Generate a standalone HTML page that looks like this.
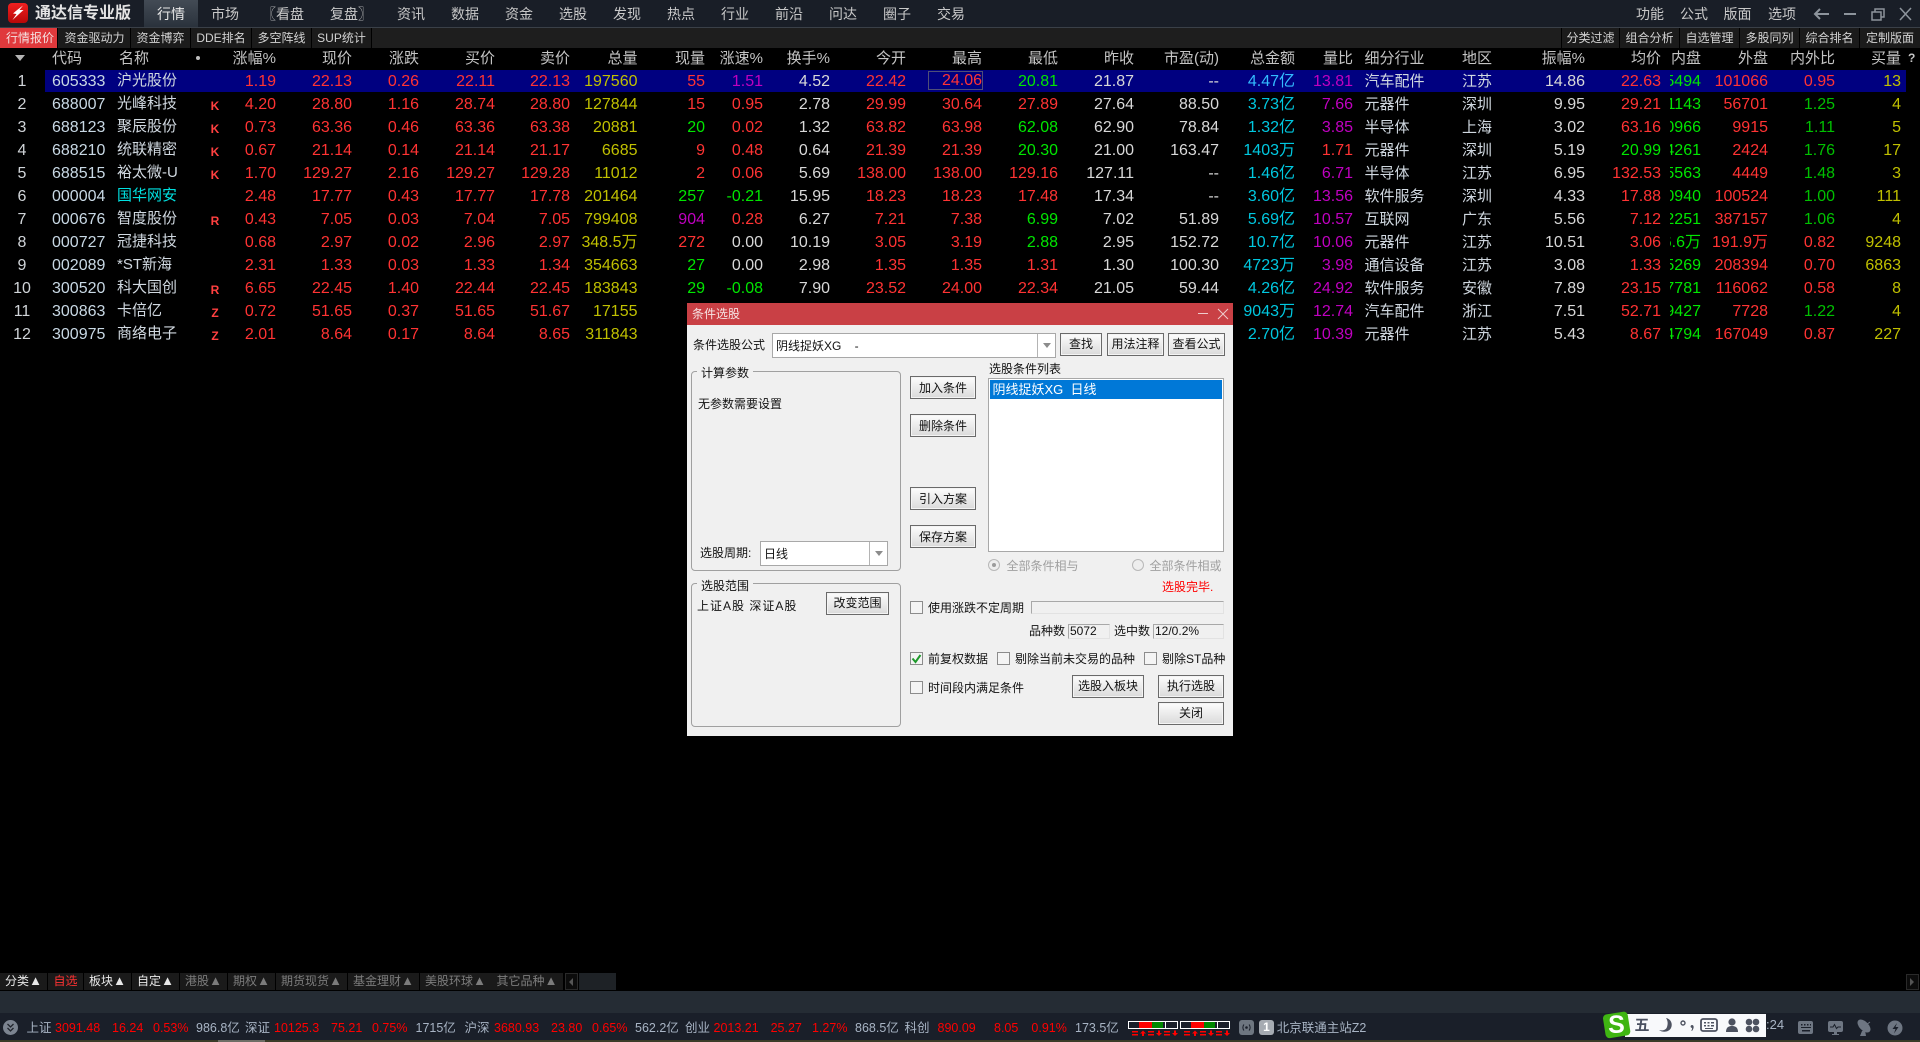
<!DOCTYPE html>
<html lang="zh"><head><meta charset="utf-8"><title>通达信专业版</title>
<style>
html,body{margin:0;padding:0;background:#000;width:1920px;height:1042px;overflow:hidden}
body{position:relative;font-family:"Liberation Sans","Noto Sans CJK SC",sans-serif;color:#d8d8d8}
div,span{box-sizing:border-box}
.a{position:absolute}
.t{position:absolute;white-space:nowrap;line-height:16px;height:16px}
.m{position:absolute;top:5px;width:60px;text-align:center;font-size:14px;line-height:18px;color:#c8c8c8;white-space:nowrap}
.tb{position:absolute;top:28px;height:20px;background:#1b1b1b;border-right:1px solid #000;text-align:center;font-size:12px;line-height:20px;color:#d2d2d2;white-space:nowrap}
.h{position:absolute;top:48px;height:22px;line-height:21px;font-size:15px;color:#c4c4c4;white-space:nowrap}
.hr{width:100px;text-align:right}
.r{position:absolute;left:0;width:1920px;height:23px;line-height:23px;font-size:16px;white-space:nowrap}
.r span{position:absolute;top:0}
.x{width:100px;text-align:right}
.i{left:0;width:44px;text-align:center;color:#d0d4d8}
.cd{left:52px;color:#c8d8e4}
.nm{left:117px;font-size:15px;color:#d0d8e0;top:-1px!important}
.fl{left:205px;width:20px;text-align:center;font-size:12px;font-weight:bold;color:#ff4040;top:2px!important}
.c1{left:176px;color:#f33}.c2{left:252px;color:#f33}.c3{left:319px;color:#f33}.c4{left:395px;color:#f33}.c5{left:470px;color:#f33}
.c6{left:537.5px;color:#c0c000}.c7{left:605px;color:#f33}.c8{left:663px;color:#f33}.c9{left:730px;color:#d8d8d8}
.c10{left:806px;color:#f33}.c11{left:882px;color:#f33}.c12{left:958px;color:#f33}.c13{left:1034px;color:#d8d8d8}.c14{left:1119px;color:#d8d8d8}
.c15{left:1195px;color:#00c8e0}.c16{left:1253px;color:#c000c0}
.ind{left:1364.5px;font-size:15px;color:#d0d8e0}.reg{left:1462px;font-size:15px;color:#d0d8e0}
.c19{left:1485px;color:#d8d8d8}.c20{left:1561px;color:#f33}
.nb{left:1670px;width:31px;height:23px;overflow:hidden;color:#00e600}
.nb b{position:absolute;right:0;top:0;font-weight:normal}
.c22{left:1668px;color:#f33}.c23{left:1735px;color:#f33}.c24{left:1801px;color:#c0c000}
.G{color:#00e600!important}.D{color:#00c000!important}.P{color:#c000c0!important}.W{color:#d8d8d8!important}.R{color:#f33!important}
.btn{position:absolute;background:linear-gradient(#fdfdfd,#dadada);border:1px solid #6a6a6a;box-shadow:inset 0 0 0 1px #f4f4f4;font-size:12px;color:#111;text-align:center;line-height:21px;white-space:nowrap}
.d{font-size:12px;color:#111}
.cb{position:absolute;width:13px;height:13px;background:#f4f4f4;border:1px solid #8c8c8c}
.grp{position:absolute;border:1px solid #a0a0a0;border-radius:4px}
.lbl{background:#f0f0f0;padding:0 4px}
.fld{position:absolute;background:#f0f0f0;border:1px solid #e2e2e2;border-top-color:#a8a8a8;border-left-color:#a8a8a8}
.bt{position:absolute;top:973px;height:17px;background:#1a1a1a;font-size:12px;line-height:17px;text-align:center;white-space:nowrap;color:#7c7c7c}
.bt i{font-style:normal;font-size:13px;line-height:13px}
.on{color:#e8e8e8}
.s{position:absolute;top:1020px;height:16px;line-height:16px;font-size:12.5px;white-space:nowrap;color:#a8b4c4}
.sr{color:#f00}
</style></head><body>

<!-- top menu -->
<div class="a" style="left:0;top:0;width:1920px;height:27px;background:#191e27"></div>
<div class="a" style="left:0;top:27px;width:1920px;height:1px;background:#3a4048"></div>
<div class="a" style="left:144px;top:0;width:54px;height:27px;background:linear-gradient(#434b55,#2a323c)"></div>
<div class="a" style="left:8px;top:3px;width:20px;height:20px;border-radius:4px;background:linear-gradient(#f02020,#b80808)"></div>
<svg class="a" style="left:8px;top:3px" width="20" height="20" viewBox="0 0 20 20"><path d="M15 2.5 8.500 7.500 5 10.500 8.500 11 4.500 17 10.500 11.500 15.500 7 11.500 7Z" fill="#fff"/></svg>
<div class="t" style="left:35px;top:5px;font-size:16px;font-weight:bold;line-height:18px;height:18px;color:#e4e4e4">通达信专业版</div>
<div class="m" style="left:141px;color:#e8e8e8">行情</div>
<div class="m" style="left:195px">市场</div>
<div class="m" style="left:262px;width:48px;text-align:left">〖看盘</div>
<div class="m" style="left:330px;width:42px;text-align:left">复盘〗</div>
<div class="m" style="left:381px">资讯</div><div class="m" style="left:435px">数据</div><div class="m" style="left:489px">资金</div><div class="m" style="left:543px">选股</div><div class="m" style="left:597px">发现</div><div class="m" style="left:651px">热点</div><div class="m" style="left:705px">行业</div><div class="m" style="left:759px">前沿</div><div class="m" style="left:813px">问达</div><div class="m" style="left:867px">圈子</div><div class="m" style="left:921px">交易</div>
<div class="m" style="left:1620px">功能</div><div class="m" style="left:1664px">公式</div><div class="m" style="left:1707.5px">版面</div><div class="m" style="left:1752px">选项</div>
<svg class="a" style="left:1812px;top:6px" width="104" height="16" viewBox="0 0 104 16" fill="none" stroke="#8d949c" stroke-width="1.5"><path d="M17 8H3M8 3 3 8l5 5" stroke-width="2"/><path d="M32 8h12" stroke-width="2"/><path d="M60 6h9v8h-9zM63 6V3h9v8h-3"/><path d="M88 2l11 12M99 2 88 14"/></svg>

<!-- tab bar -->
<div class="a" style="left:0;top:28px;width:1920px;height:20px;background:#1e1e1e"></div>
<div class="tb" style="left:0;width:58px;background:#e0393c;color:#f4e0e0;padding-left:3px">行情报价</div>
<div class="tb" style="left:59px;width:72px">资金驱动力</div>
<div class="tb" style="left:131px;width:60px">资金博弈</div>
<div class="tb" style="left:191px;width:61px">DDE排名</div>
<div class="tb" style="left:252px;width:60px">多空阵线</div>
<div class="tb" style="left:312px;width:60px">SUP统计</div>
<div class="tb" style="left:1561px;width:59px;border-left:1px solid #000">分类过滤</div>
<div class="tb" style="left:1620px;width:60px">组合分析</div>
<div class="tb" style="left:1680px;width:60px">自选管理</div>
<div class="tb" style="left:1740px;width:60px">多股同列</div>
<div class="tb" style="left:1800px;width:60px">综合排名</div>
<div class="tb" style="left:1860px;width:60px;border:0">定制版面</div>

<!-- header -->
<svg class="a" style="left:15px;top:55px" width="11" height="6"><path d="M0 0h10L5 6Z" fill="#b4b4b4"/></svg>
<div class="a" style="left:196px;top:56px;width:4px;height:4px;border-radius:2px;background:#c0c0c0"></div>
<div class="h" style="left:52px">代码</div><div class="h" style="left:119px">名称</div>
<div class="h hr" style="left:176px">涨幅%</div><div class="h hr" style="left:252px">现价</div><div class="h hr" style="left:319px">涨跌</div><div class="h hr" style="left:395px">买价</div><div class="h hr" style="left:470px">卖价</div><div class="h hr" style="left:537.5px">总量</div><div class="h hr" style="left:605px">现量</div><div class="h hr" style="left:663px">涨速%</div><div class="h hr" style="left:730px">换手%</div><div class="h hr" style="left:806px">今开</div><div class="h hr" style="left:882px">最高</div><div class="h hr" style="left:958px">最低</div><div class="h hr" style="left:1034px">昨收</div><div class="h hr" style="left:1119px">市盈(动)</div><div class="h hr" style="left:1195px">总金额</div><div class="h hr" style="left:1253px">量比</div>
<div class="h" style="left:1364.5px">细分行业</div><div class="h" style="left:1462px">地区</div>
<div class="h hr" style="left:1485px">振幅%</div><div class="h hr" style="left:1561px">均价</div><div class="h hr" style="left:1601px">内盘</div><div class="h hr" style="left:1668px">外盘</div><div class="h hr" style="left:1735px">内外比</div><div class="h hr" style="left:1801px">买量</div>
<div class="h" style="left:1908px;font-size:12px;font-weight:bold">?</div>

<!-- selected row bg -->
<div class="a" style="left:45px;top:70px;width:1861px;height:22px;background:#000080"></div>
<div class="a" style="left:928px;top:71px;width:55px;height:19px;border:1px solid #4e4e78"></div>

<!-- rows -->
<div class="r" style="top:70px"><span class="i">1</span><span class="cd">605333</span><span class="nm">沪光股份</span><span class="x c1">1.19</span><span class="x c2">22.13</span><span class="x c3">0.26</span><span class="x c4">22.11</span><span class="x c5">22.13</span><span class="x c6">197560</span><span class="x c7">55</span><span class="x c8 P">1.51</span><span class="x c9">4.52</span><span class="x c10">22.42</span><span class="x c11" style="top:-1px">24.06</span><span class="x c12 G">20.81</span><span class="x c13">21.87</span><span class="x c14">--</span><span class="x c15" style="color:#33bbff">4.47亿</span><span class="x c16">13.81</span><span class="ind">汽车配件</span><span class="reg">江苏</span><span class="x c19">14.86</span><span class="x c20">22.63</span><span class="nb"><b>5494</b></span><span class="x c22">101066</span><span class="x c23">0.95</span><span class="x c24">13</span></div>
<div class="r" style="top:93px"><span class="i">2</span><span class="cd">688007</span><span class="nm">光峰科技</span><span class="fl">K</span><span class="x c1">4.20</span><span class="x c2">28.80</span><span class="x c3">1.16</span><span class="x c4">28.74</span><span class="x c5">28.80</span><span class="x c6">127844</span><span class="x c7">15</span><span class="x c8">0.95</span><span class="x c9">2.78</span><span class="x c10">29.99</span><span class="x c11">30.64</span><span class="x c12">27.89</span><span class="x c13">27.64</span><span class="x c14">88.50</span><span class="x c15">3.73亿</span><span class="x c16">7.66</span><span class="ind">元器件</span><span class="reg">深圳</span><span class="x c19">9.95</span><span class="x c20">29.21</span><span class="nb"><b>1143</b></span><span class="x c22">56701</span><span class="x c23 D">1.25</span><span class="x c24">4</span></div>
<div class="r" style="top:116px"><span class="i">3</span><span class="cd">688123</span><span class="nm">聚辰股份</span><span class="fl">K</span><span class="x c1">0.73</span><span class="x c2">63.36</span><span class="x c3">0.46</span><span class="x c4">63.36</span><span class="x c5">63.38</span><span class="x c6">20881</span><span class="x c7 G">20</span><span class="x c8">0.02</span><span class="x c9">1.32</span><span class="x c10">63.82</span><span class="x c11">63.98</span><span class="x c12 G">62.08</span><span class="x c13">62.90</span><span class="x c14">78.84</span><span class="x c15">1.32亿</span><span class="x c16">3.85</span><span class="ind">半导体</span><span class="reg">上海</span><span class="x c19">3.02</span><span class="x c20">63.16</span><span class="nb"><b>0966</b></span><span class="x c22">9915</span><span class="x c23 D">1.11</span><span class="x c24">5</span></div>
<div class="r" style="top:139px"><span class="i">4</span><span class="cd">688210</span><span class="nm">统联精密</span><span class="fl">K</span><span class="x c1">0.67</span><span class="x c2">21.14</span><span class="x c3">0.14</span><span class="x c4">21.14</span><span class="x c5">21.17</span><span class="x c6">6685</span><span class="x c7">9</span><span class="x c8">0.48</span><span class="x c9">0.64</span><span class="x c10">21.39</span><span class="x c11">21.39</span><span class="x c12 G">20.30</span><span class="x c13">21.00</span><span class="x c14">163.47</span><span class="x c15">1403万</span><span class="x c16 R">1.71</span><span class="ind">元器件</span><span class="reg">深圳</span><span class="x c19">5.19</span><span class="x c20 G">20.99</span><span class="nb"><b>4261</b></span><span class="x c22">2424</span><span class="x c23 D">1.76</span><span class="x c24">17</span></div>
<div class="r" style="top:162px"><span class="i">5</span><span class="cd">688515</span><span class="nm">裕太微-U</span><span class="fl">K</span><span class="x c1">1.70</span><span class="x c2">129.27</span><span class="x c3">2.16</span><span class="x c4">129.27</span><span class="x c5">129.28</span><span class="x c6">11012</span><span class="x c7">2</span><span class="x c8">0.06</span><span class="x c9">5.69</span><span class="x c10">138.00</span><span class="x c11">138.00</span><span class="x c12">129.16</span><span class="x c13">127.11</span><span class="x c14">--</span><span class="x c15">1.46亿</span><span class="x c16">6.71</span><span class="ind">半导体</span><span class="reg">江苏</span><span class="x c19">6.95</span><span class="x c20">132.53</span><span class="nb"><b>5563</b></span><span class="x c22">4449</span><span class="x c23 D">1.48</span><span class="x c24">3</span></div>
<div class="r" style="top:185px"><span class="i">6</span><span class="cd">000004</span><span class="nm" style="color:#00e0e0">国华网安</span><span class="x c1">2.48</span><span class="x c2">17.77</span><span class="x c3">0.43</span><span class="x c4">17.77</span><span class="x c5">17.78</span><span class="x c6">201464</span><span class="x c7 G">257</span><span class="x c8 G">-0.21</span><span class="x c9">15.95</span><span class="x c10">18.23</span><span class="x c11">18.23</span><span class="x c12">17.48</span><span class="x c13">17.34</span><span class="x c14">--</span><span class="x c15">3.60亿</span><span class="x c16">13.56</span><span class="ind">软件服务</span><span class="reg">深圳</span><span class="x c19">4.33</span><span class="x c20">17.88</span><span class="nb"><b>0940</b></span><span class="x c22">100524</span><span class="x c23 D">1.00</span><span class="x c24">111</span></div>
<div class="r" style="top:208px"><span class="i">7</span><span class="cd">000676</span><span class="nm">智度股份</span><span class="fl">R</span><span class="x c1">0.43</span><span class="x c2">7.05</span><span class="x c3">0.03</span><span class="x c4">7.04</span><span class="x c5">7.05</span><span class="x c6">799408</span><span class="x c7 P">904</span><span class="x c8">0.28</span><span class="x c9">6.27</span><span class="x c10">7.21</span><span class="x c11">7.38</span><span class="x c12 G">6.99</span><span class="x c13">7.02</span><span class="x c14">51.89</span><span class="x c15">5.69亿</span><span class="x c16">10.57</span><span class="ind">互联网</span><span class="reg">广东</span><span class="x c19">5.56</span><span class="x c20">7.12</span><span class="nb"><b>2251</b></span><span class="x c22">387157</span><span class="x c23 D">1.06</span><span class="x c24">4</span></div>
<div class="r" style="top:231px"><span class="i">8</span><span class="cd">000727</span><span class="nm">冠捷科技</span><span class="x c1">0.68</span><span class="x c2">2.97</span><span class="x c3">0.02</span><span class="x c4">2.96</span><span class="x c5">2.97</span><span class="x c6">348.5万</span><span class="x c7">272</span><span class="x c8 W">0.00</span><span class="x c9">10.19</span><span class="x c10">3.05</span><span class="x c11">3.19</span><span class="x c12 G">2.88</span><span class="x c13">2.95</span><span class="x c14">152.72</span><span class="x c15">10.7亿</span><span class="x c16">10.06</span><span class="ind">元器件</span><span class="reg">江苏</span><span class="x c19">10.51</span><span class="x c20">3.06</span><span class="nb"><b>6.6万</b></span><span class="x c22">191.9万</span><span class="x c23">0.82</span><span class="x c24">9248</span></div>
<div class="r" style="top:254px"><span class="i">9</span><span class="cd">002089</span><span class="nm">*ST新海</span><span class="x c1">2.31</span><span class="x c2">1.33</span><span class="x c3">0.03</span><span class="x c4">1.33</span><span class="x c5">1.34</span><span class="x c6">354663</span><span class="x c7 G">27</span><span class="x c8 W">0.00</span><span class="x c9">2.98</span><span class="x c10">1.35</span><span class="x c11">1.35</span><span class="x c12">1.31</span><span class="x c13">1.30</span><span class="x c14">100.30</span><span class="x c15">4723万</span><span class="x c16">3.98</span><span class="ind">通信设备</span><span class="reg">江苏</span><span class="x c19">3.08</span><span class="x c20">1.33</span><span class="nb"><b>5269</b></span><span class="x c22">208394</span><span class="x c23">0.70</span><span class="x c24">6863</span></div>
<div class="r" style="top:277px"><span class="i">10</span><span class="cd">300520</span><span class="nm">科大国创</span><span class="fl">R</span><span class="x c1">6.65</span><span class="x c2">22.45</span><span class="x c3">1.40</span><span class="x c4">22.44</span><span class="x c5">22.45</span><span class="x c6">183843</span><span class="x c7 G">29</span><span class="x c8 G">-0.08</span><span class="x c9">7.90</span><span class="x c10">23.52</span><span class="x c11">24.00</span><span class="x c12">22.34</span><span class="x c13">21.05</span><span class="x c14">59.44</span><span class="x c15">4.26亿</span><span class="x c16">24.92</span><span class="ind">软件服务</span><span class="reg">安徽</span><span class="x c19">7.89</span><span class="x c20">23.15</span><span class="nb"><b>7781</b></span><span class="x c22">116062</span><span class="x c23">0.58</span><span class="x c24">8</span></div>
<div class="r" style="top:300px"><span class="i">11</span><span class="cd">300863</span><span class="nm">卡倍亿</span><span class="fl">Z</span><span class="x c1">0.72</span><span class="x c2">51.65</span><span class="x c3">0.37</span><span class="x c4">51.65</span><span class="x c5">51.67</span><span class="x c6">17155</span><span class="x c15">9043万</span><span class="x c16">12.74</span><span class="ind">汽车配件</span><span class="reg">浙江</span><span class="x c19">7.51</span><span class="x c20">52.71</span><span class="nb"><b>9427</b></span><span class="x c22">7728</span><span class="x c23 D">1.22</span><span class="x c24">4</span></div>
<div class="r" style="top:323px"><span class="i">12</span><span class="cd">300975</span><span class="nm">商络电子</span><span class="fl">Z</span><span class="x c1">2.01</span><span class="x c2">8.64</span><span class="x c3">0.17</span><span class="x c4">8.64</span><span class="x c5">8.65</span><span class="x c6">311843</span><span class="x c7 G">29</span><span class="x c15">2.70亿</span><span class="x c16">10.39</span><span class="ind">元器件</span><span class="reg">江苏</span><span class="x c19">5.43</span><span class="x c20">8.67</span><span class="nb"><b>4794</b></span><span class="x c22">167049</span><span class="x c23">0.87</span><span class="x c24">227</span></div>

<!-- dialog -->
<div class="a" style="left:687px;top:303px;width:546px;height:433px;background:#f0f0f0"></div>
<div class="a" style="left:687px;top:303px;width:546px;height:22px;background:#c94045"></div>
<div class="t d" style="left:692px;top:306px;color:#f6e4e4">条件选股</div>
<svg class="a" style="left:1197px;top:308px" width="34" height="12" fill="none" stroke="#eecccc"><path d="M1 5.500h10M21 1l10 10M31 1 21 11"/></svg>

<div class="t d" style="left:693px;top:337px">条件选股公式</div>
<div class="a" style="left:772px;top:333px;width:284px;height:25px;background:#fff;border:1px solid #a8a8a8"></div>
<div class="a" style="left:1037px;top:334px;width:1px;height:23px;background:#b4b4b4"></div>
<svg class="a" style="left:1043px;top:343px" width="9" height="5"><path d="M0 0h8L4 5Z" fill="#8c8c8c"/></svg>
<div class="t d" style="left:776px;top:338px;white-space:pre">阴线捉妖XG    -</div>
<div class="btn" style="left:1060px;top:333px;width:42px;height:23px">查找</div>
<div class="btn" style="left:1107px;top:333px;width:57px;height:23px">用法注释</div>
<div class="btn" style="left:1168px;top:333px;width:57px;height:23px">查看公式</div>

<div class="grp" style="left:691px;top:371px;width:210px;height:200px"></div>
<div class="t d lbl" style="left:697px;top:365px">计算参数</div>
<div class="t d" style="left:698px;top:396px">无参数需要设置</div>
<div class="t d" style="left:700px;top:545px">选股周期:</div>
<div class="a" style="left:760px;top:541px;width:128px;height:25px;background:#fff;border:1px solid #a8a8a8"></div>
<div class="a" style="left:869px;top:542px;width:1px;height:23px;background:#b4b4b4"></div>
<svg class="a" style="left:875px;top:551px" width="9" height="5"><path d="M0 0h8L4 5Z" fill="#8c8c8c"/></svg>
<div class="t d" style="left:764px;top:546px">日线</div>

<div class="btn" style="left:910px;top:376px;width:66px;height:23px;line-height:22px">加入条件</div>
<div class="btn" style="left:910px;top:414px;width:66px;height:23px;line-height:22px">删除条件</div>
<div class="btn" style="left:910px;top:487px;width:66px;height:23px;line-height:22px">引入方案</div>
<div class="btn" style="left:910px;top:525px;width:66px;height:23px;line-height:22px">保存方案</div>

<div class="t d" style="left:989px;top:361px">选股条件列表</div>
<div class="a" style="left:988px;top:378px;width:236px;height:174px;background:#fff;border:1px solid #a8a8a8"></div>
<div class="a" style="left:990px;top:380px;width:232px;height:19px;background:#0078d7"></div>
<div class="t" style="left:992.5px;top:382px;font-size:13px;color:#fff;white-space:pre">阴线捉妖XG  日线</div>

<svg class="a" style="left:987px;top:558px" width="14" height="14"><circle cx="7" cy="7" r="5.500" fill="#eee" stroke="#b8b8b8"/><circle cx="7" cy="7" r="2" fill="#9c9c9c"/></svg>
<div class="t d" style="left:1006.500px;top:557.500px;color:#a0a0a0">全部条件相与</div>
<svg class="a" style="left:1131px;top:558px" width="14" height="14"><circle cx="7" cy="7" r="5.500" fill="#eee" stroke="#b8b8b8"/></svg>
<div class="t d" style="left:1149.500px;top:557.500px;color:#a0a0a0">全部条件相或</div>
<div class="t d" style="left:1162px;top:579px;color:#f00">选股完毕.</div>

<div class="grp" style="left:691px;top:583px;width:210px;height:144px"></div>
<div class="t d lbl" style="left:697px;top:578px">选股范围</div>
<div class="t d" style="left:697px;top:597.500px;letter-spacing:1px">上证A股 深证A股</div>
<div class="btn" style="left:826px;top:592px;width:63px;height:23px">改变范围</div>

<div class="cb" style="left:910px;top:601px"></div>
<div class="t d" style="left:928px;top:600px">使用涨跌不定周期</div>
<div class="fld" style="left:1030.500px;top:601px;width:193.500px;height:13px"></div>
<div class="t d" style="left:1029px;top:623px">品种数</div>
<div class="fld" style="left:1068px;top:624px;width:42px;height:15px"></div>
<div class="t d" style="left:1070px;top:623px">5072</div>
<div class="t d" style="left:1114px;top:623px">选中数</div>
<div class="fld" style="left:1153px;top:624px;width:71px;height:15px"></div>
<div class="t d" style="left:1155px;top:623px">12/0.2%</div>

<div class="cb" style="left:910px;top:652px"></div>
<svg class="a" style="left:910px;top:652px" width="13" height="13"><path d="M2.500 6.500 5.500 10 10.500 3" fill="none" stroke="#1f9a2c" stroke-width="2"/></svg>
<div class="t d" style="left:928px;top:651px">前复权数据</div>
<div class="cb" style="left:997px;top:652px"></div>
<div class="t d" style="left:1015px;top:651px">剔除当前未交易的品种</div>
<div class="cb" style="left:1144px;top:652px"></div>
<div class="t d" style="left:1162px;top:651px">剔除ST品种</div>
<div class="cb" style="left:910px;top:681px"></div>
<div class="t d" style="left:928px;top:680px">时间段内满足条件</div>
<div class="btn" style="left:1072px;top:675px;width:72px;height:23px">选股入板块</div>
<div class="btn" style="left:1158px;top:675px;width:66px;height:23px">执行选股</div>
<div class="btn" style="left:1158px;top:702px;width:66px;height:23px">关闭</div>

<!-- bottom tabs -->
<div class="bt on" style="left:0;width:47px">分类<i>▲</i></div>
<div class="bt" style="left:48px;width:35px;color:#ff3232">自选</div>
<div class="bt on" style="left:84px;width:47px">板块<i>▲</i></div>
<div class="bt on" style="left:132px;width:47px">自定<i>▲</i></div>
<div class="bt" style="left:180px;width:47px">港股<i>▲</i></div>
<div class="bt" style="left:228px;width:47px">期权<i>▲</i></div>
<div class="bt" style="left:276px;width:71px">期货现货<i>▲</i></div>
<div class="bt" style="left:348px;width:71px">基金理财<i>▲</i></div>
<div class="bt" style="left:420px;width:71px">美股环球<i>▲</i></div>
<div class="bt" style="left:491px;width:72px">其它品种<i>▲</i></div>
<div class="a" style="left:565px;top:973px;width:13px;height:17px;background:#0c0c0c;border:1px solid #2a2a2a"></div>
<svg class="a" style="left:569px;top:978px" width="5" height="8"><path d="M4 0v8L0 4Z" fill="#555"/></svg>
<div class="a" style="left:579px;top:973px;width:37px;height:17px;background:#1e2226"></div>
<div class="a" style="left:1906px;top:974px;width:13px;height:16px;background:#0c0c0c;border:1px solid #2a2a2a"></div>
<svg class="a" style="left:1910px;top:978px" width="5" height="8"><path d="M0 0v8L4 4Z" fill="#555"/></svg>

<!-- bottom bands -->
<div class="a" style="left:0;top:991px;width:1920px;height:22px;background:#252c34"></div>
<div class="a" style="left:0;top:1013px;width:1920px;height:27px;background:#1a1f29"></div>
<div class="a" style="left:0;top:1040px;width:1920px;height:2px;background:#3a3b28"></div>
<div class="a" style="left:218px;top:1040px;width:47px;height:2px;background:#6e6e66"></div>

<!-- status bar -->
<svg class="a" style="left:3px;top:1020px" width="15" height="15"><circle cx="7.500" cy="7.500" r="7.500" fill="#7c8490"/><path d="M4.500 4 7.500 7 10.500 4M4.500 8 7.500 11 10.500 8" fill="none" stroke="#20242c" stroke-width="1.300"/></svg>
<div class="s" style="left:26.500px">上证</div><div class="s sr" style="left:55px">3091.48</div><div class="s sr" style="left:112px">16.24</div><div class="s sr" style="left:153px">0.53%</div><div class="s" style="left:196px">986.8亿</div>
<div class="s" style="left:245px">深证</div><div class="s sr" style="left:274px">10125.3</div><div class="s sr" style="left:331px">75.21</div><div class="s sr" style="left:372px">0.75%</div><div class="s" style="left:415.500px">1715亿</div>
<div class="s" style="left:464.500px">沪深</div><div class="s sr" style="left:494px">3680.93</div><div class="s sr" style="left:551px">23.80</div><div class="s sr" style="left:592px">0.65%</div><div class="s" style="left:635px">562.2亿</div>
<div class="s" style="left:685px">创业</div><div class="s sr" style="left:713.500px">2013.21</div><div class="s sr" style="left:770.600px">25.27</div><div class="s sr" style="left:812px">1.27%</div><div class="s" style="left:855px">868.5亿</div>
<div class="s" style="left:904.500px">科创</div><div class="s sr" style="left:937.500px">890.09</div><div class="s sr" style="left:994px">8.05</div><div class="s sr" style="left:1031.400px">0.91%</div><div class="s" style="left:1075px">173.5亿</div>

<svg class="a" style="left:1128px;top:1020px" width="103" height="16">
<g><rect x=".5" y="1.500" width="49" height="7" fill="#1a1f29" stroke="#fff"/><rect x="11" y="2" width="13" height="6" fill="#f00"/><rect x="24" y="2" width="11" height="6" fill="#080"/><rect x="37" y="2" width="1" height="6" fill="#fff"/>
<path d="M4 11h6v1.500H4zM4 14h6v1.500H4zM20 11h6v1.500h-6zM20 14h6v1.500h-6zM36 11h6v1.500h-6zM36 14h6v1.500h-6z" fill="#f00"/><path d="M15 10.500l3 3h-2v2.500h-2v-2.500h-2zM31 16l3-3h-2v-2.500h-2V13h-2zM47 16l3-3h-2v-2.500h-2V13h-2z" fill="#f00"/></g>
<g transform="translate(52)"><rect x=".5" y="1.500" width="49" height="7" fill="#1a1f29" stroke="#fff"/><rect x="11" y="2" width="13" height="6" fill="#f00"/><rect x="24" y="2" width="11" height="6" fill="#080"/><rect x="37" y="2" width="1" height="6" fill="#fff"/>
<path d="M4 11h6v1.500H4zM4 14h6v1.500H4zM20 11h6v1.500h-6zM20 14h6v1.500h-6zM36 11h6v1.500h-6zM36 14h6v1.500h-6z" fill="#f00"/><path d="M15 10.500l3 3h-2v2.500h-2v-2.500h-2zM31 16l3-3h-2v-2.500h-2V13h-2zM47 16l3-3h-2v-2.500h-2V13h-2z" fill="#f00"/></g>
</svg>
<svg class="a" style="left:1239px;top:1020px" width="15" height="15"><rect width="15" height="15" rx="3" fill="#6e7680"/><circle cx="7.500" cy="7.500" r="1.300" fill="#1a1f29"/><path d="M5 4.500c-1.500 1.500-1.500 4.500 0 6M10 4.500c1.500 1.500 1.500 4.500 0 6" fill="none" stroke="#1a1f29"/></svg>
<div class="a" style="left:1259px;top:1020px;width:15px;height:15px;border-radius:3px;background:#a6abb2;color:#fff;font-size:12px;line-height:15px;text-align:center;font-weight:bold">1</div>
<div class="s" style="left:1276.700px">北京联通主站Z2</div>
<div class="s" style="left:1766px;color:#a8b4c4;font-size:13px;top:1017px">:24</div>

<!-- IME toolbar -->
<div class="a" style="left:1625px;top:1014px;width:141px;height:23px;background:#f8f9fb"></div>
<svg class="a" style="left:1600px;top:1009px" width="34" height="31"><rect x="4" y="4" width="25" height="24" rx="4" fill="#3fb512" transform="rotate(-9 16 15)"/><text x="16.500" y="24" font-family="Liberation Sans" font-size="25" font-weight="bold" fill="#fff" text-anchor="middle">S</text></svg>
<div class="a" style="left:1634px;top:1016px;width:16px;height:19px;line-height:19px;text-align:center;font-size:15px;font-weight:bold;color:#4a5060">五</div>
<svg class="a" style="left:1658px;top:1016px" width="104" height="19" fill="#4d5260">
<path d="M8 2c5 1 7 6 5 10-2 4-8 5-12 2 4 1 7 0 8-3s1-6-1-9Z"/>
<circle cx="25" cy="7" r="2" fill="none" stroke="#4d5260" stroke-width="1.400"/><path d="M34 9c2 0 2.500 3 0 6l-.7-.5c1-1.500 1-2.500.2-2.800-1.500-.5-1-2.700.5-2.700Z"/>
<rect x="43" y="3" width="16" height="12" rx="2" fill="none" stroke="#4d5260" stroke-width="1.800"/><path d="M46 6h2v1.500h-2zM49.500 6h2v1.500h-2zM53 6h3v1.500h-3zM46 9h2v1.500h-2zM49.500 9h2v1.500h-2zM53 9h3v1.500h-3zM47 12h8v1h-8z"/>
<circle cx="74" cy="6" r="3.600"/><path d="M68 16c0-5 3-6 6-6s6 1 6 6Z"/>
<circle cx="91" cy="6" r="3.300"/><circle cx="98" cy="6" r="3.300"/><circle cx="91" cy="13" r="3.300"/><circle cx="98" cy="13" r="3.300"/>
</svg>
<svg class="a" style="left:1797px;top:1019px" width="112" height="18" fill="#6e7682">
<rect x="1" y="2" width="15" height="13" rx="2"/><path d="M4 5h1.500v1.500H4zM7 5h1.500v1.500H7zM10 5h1.500v1.500H10zM13 5h1v1.500h-1zM4 8h10v1H4zM5 11h8v1.500H5z" fill="#1a1f29"/>
<rect x="31" y="2" width="15" height="11" rx="2"/><path d="M37 13h3v2h2v1h-7v-1h2z"/><path d="M33 8h3l1.500-2.500 2 4 1.500-1.500h3" fill="none" stroke="#1a1f29"/>
<ellipse cx="67" cy="7" rx="8" ry="4.500" transform="rotate(45 67 7)"/><path d="M65 12l-2 5h6l-1-6z"/><path d="M69 6l4-3" stroke="#6e7682"/>
<circle cx="98" cy="9" r="7.500"/><path d="M100 4 95.500 10h3L97 14.500 101.500 8h-3z" fill="#1a1f29"/>
</svg>
</body></html>
